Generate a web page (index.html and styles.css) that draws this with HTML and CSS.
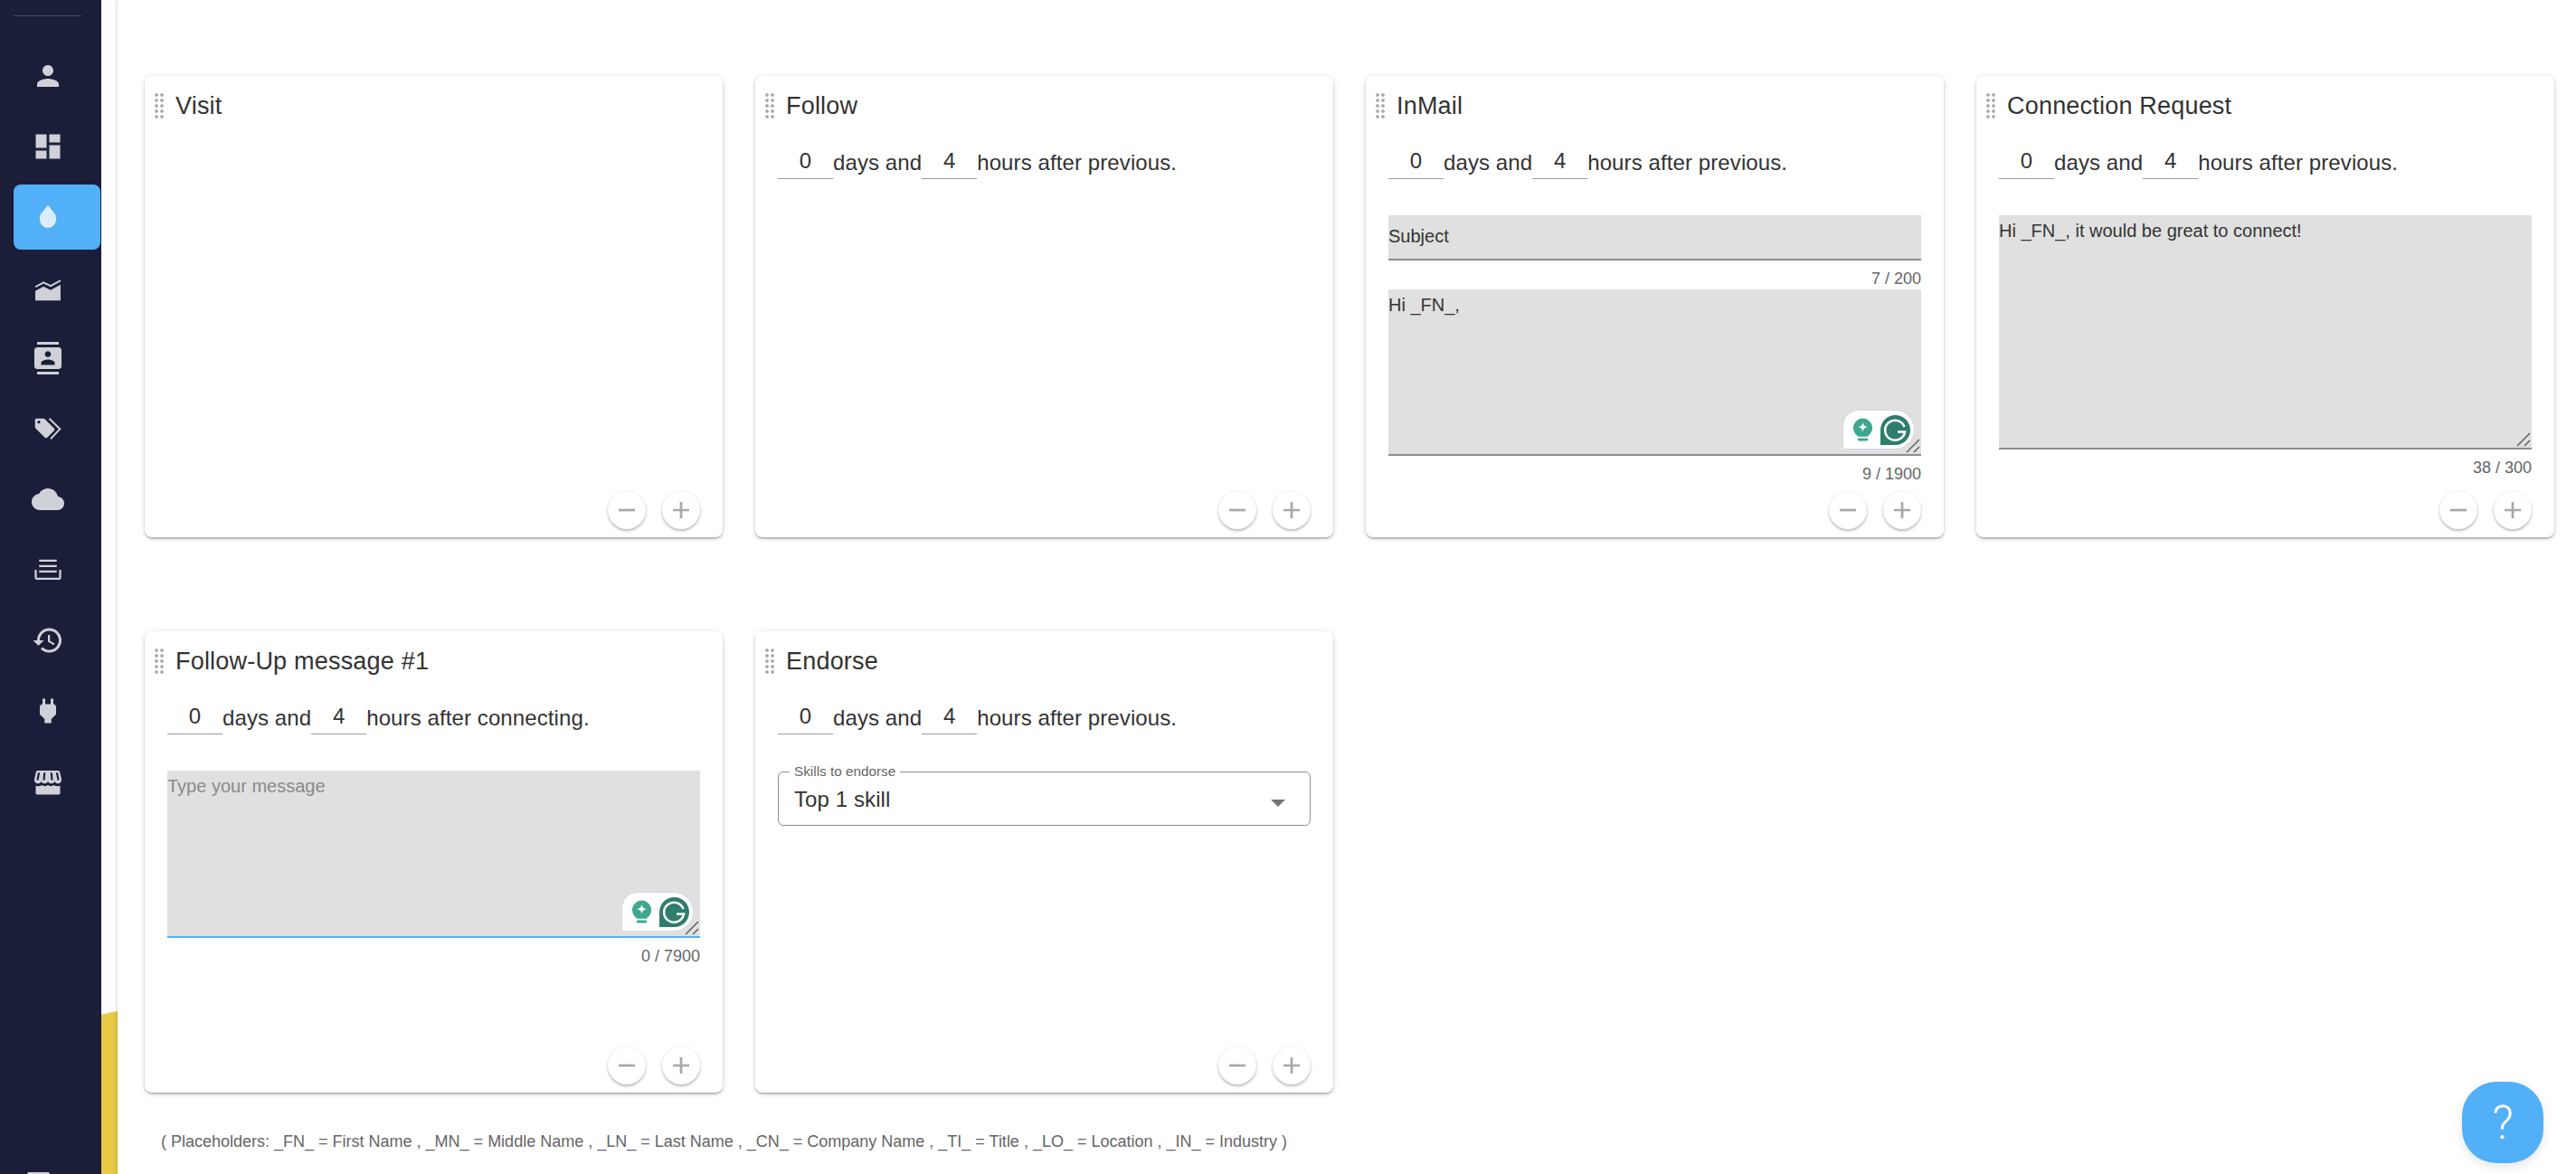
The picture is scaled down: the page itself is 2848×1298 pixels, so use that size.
FILE: index.html
```html
<!DOCTYPE html>
<html>
<head>
    <meta charset="UTF-8" />
    <title>Campaign steps</title>
    <link rel="stylesheet" href="styles.css">
</head>
<body>
<nav class="sidebar">
    <div class="sidebar-rule"></div>
    <a class="nav-item"><svg class="nav-icon" viewBox="0 0 24 24"><path d="M12 12c2.21 0 4-1.79 4-4s-1.79-4-4-4-4 1.79-4 4 1.79 4 4 4zm0 2c-2.67 0-8 1.34-8 4v2h16v-2c0-2.66-5.33-4-8-4z"/></svg></a>
    <a class="nav-item"><svg class="nav-icon" viewBox="0 0 24 24"><path d="M3 13h8V3H3v10zm0 8h8v-6H3v6zm10 0h8V11h-8v10zm0-18v6h8V3h-8z"/></svg></a>
    <a class="nav-item active"><svg class="nav-icon" viewBox="0 0 24 24"><path d="M12 3.300l4.400 5.300c1.100 1.300 1.700 2.700 1.700 4.600 0 3.700-2.700 6.800-6.100 6.800s-6.100-3.100-6.100-6.800c0-1.900.6-3.300 1.700-4.600z"/></svg></a>
    <a class="nav-item"><svg class="nav-icon" viewBox="0 0 24 24"><path d="M2.700 21.500v-7l6-3.300 5.300 2.600 7.300-4v11.700z"/><path class="nav-line" d="M2.700 11.500l6-3.300 5.300 2.600 7.300-4"/></svg></a>
    <a class="nav-item"><svg class="nav-icon" viewBox="0 0 24 24"><path d="M20 0H4v2h16V0zM4 24h16v-2H4v2zM20 4H4c-1.100 0-2 .9-2 2v12c0 1.100.9 2 2 2h16c1.100 0 2-.9 2-2V6c0-1.100-.9-2-2-2zm-8 2.750c1.240 0 2.250 1.010 2.250 2.250s-1.010 2.250-2.250 2.250S9.750 10.240 9.750 9 10.760 6.750 12 6.750zM17 17H7v-1.500c0-1.670 3.330-2.500 5-2.500s5 .83 5 2.500V17z"/></svg></a>
    <a class="nav-item"><svg class="nav-icon" viewBox="0 0 24 24"><path fill-rule="evenodd" d="M3.500 4.500h5.200c.4 0 .8.2 1.100.5l6.700 6.700c.5.5.5 1.300 0 1.800l-5 5c-.5.5-1.300.5-1.800 0L3 11.800c-.3-.3-.5-.7-.5-1.100V5.500c0-.6.4-1 1-1zM5.300 6a1.100 1.100 0 1 0 0 2.200 1.100 1.100 0 0 0 0-2.200z"/><path class="nav-line" d="M13 4.500l7.800 7.700-6.800 7.300"/></svg></a>
    <a class="nav-item"><svg class="nav-icon" viewBox="0 0 24 24"><path d="M19.350 10.040C18.670 6.590 15.640 4 12 4 9.110 4 6.600 5.640 5.350 8.040 2.340 8.360 0 10.910 0 14c0 3.310 2.690 6 6 6h13c2.760 0 5-2.240 5-5 0-2.640-2.050-4.780-4.650-4.960z"/></svg></a>
    <a class="nav-item"><svg class="nav-icon" viewBox="0 0 24 24"><path d="M5.500 4.500h13V6h-13zM5.500 8.500h13V10h-13zM5.500 12.500h13V14h-13z"/><path class="nav-line tray" d="M3 12v5.500a1 1 0 0 0 1 1h16a1 1 0 0 0 1-1V12"/></svg></a>
    <a class="nav-item"><svg class="nav-icon" viewBox="0 0 24 24"><path d="M13 3c-4.970 0-9 4.030-9 9H1l3.890 3.890.07.14L9 12H6c0-3.870 3.130-7 7-7s7 3.130 7 7-3.130 7-7 7c-1.930 0-3.680-.79-4.940-2.060l-1.420 1.420C8.270 19.990 10.510 21 13 21c4.970 0 9-4.030 9-9s-4.030-9-9-9zm-1 5v5l4.280 2.540.72-1.210-3.500-2.080V8H12z"/></svg></a>
    <a class="nav-item"><svg class="nav-icon" viewBox="0 0 24 24"><path d="M16.010 7L16 3h-2v4h-4V3H8v4h-.01C7 6.990 6 7.990 6 8.990v5.490L9.500 18v3h5v-3l3.500-3.510v-5.500c0-1-1-2-1.990-1.990z"/></svg></a>
    <a class="nav-item"><svg class="nav-icon" viewBox="0 0 24 24"><path d="M4.500 4h15c.6 0 1.100.4 1.300 1l1.200 5.500c.2 1.800-1 3-2.500 3-1.200 0-2-.6-2.500-1.400-.5.8-1.500 1.400-2.500 1.400s-2-.6-2.500-1.400c-.5.8-1.500 1.400-2.500 1.400s-2-.6-2.500-1.400c-.5.8-1.300 1.400-2.500 1.400-1.500 0-2.700-1.200-2.500-3L3.200 5c.2-.6.7-1 1.300-1z"/><path class="nav-stripe" d="M5.400 5.500L4.300 11M9.500 5.500L9 11M14.500 5.500l.5 5.500M18.600 5.500l1.100 5.500"/><path d="M3 15.200c1.800.6 3.300.3 4.500-.5 1.400 1 3 1 4.500 0 1.400 1 3 1 4.500 0 1.200.8 2.700 1.100 4.500.5v5.300c0 .7-.5 1.200-1.200 1.200H4.200c-.7 0-1.200-.5-1.200-1.200z"/></svg></a>
    <div class="sidebar-peek"></div>
</nav>

<div class="gutter">
    <svg class="gutter-wave" viewBox="0 0 18 180" preserveAspectRatio="none"><path d="M0 4Q9 1.500 18 0V180H0z"/></svg>
</div>

<main class="main">
    <div class="cards">
        <section class="card">
            <header class="card-head"><span class="drag"></span><h2 class="card-title">Visit</h2></header>
            <div class="card-actions">
                <button class="round-btn"><svg viewBox="0 0 24 24"><path d="M3 12h18"/></svg></button>
                <button class="round-btn"><svg viewBox="0 0 24 24"><path d="M3 12h18M12 3v18"/></svg></button>
            </div>
        </section>

        <section class="card">
            <header class="card-head"><span class="drag"></span><h2 class="card-title">Follow</h2></header>
            <div class="delay"><input class="delay-input" value="0">days and<input class="delay-input" value="4">hours after previous.</div>
            <div class="card-actions">
                <button class="round-btn"><svg viewBox="0 0 24 24"><path d="M3 12h18"/></svg></button>
                <button class="round-btn"><svg viewBox="0 0 24 24"><path d="M3 12h18M12 3v18"/></svg></button>
            </div>
        </section>

        <section class="card">
            <header class="card-head"><span class="drag"></span><h2 class="card-title">InMail</h2></header>
            <div class="delay"><input class="delay-input" value="0">days and<input class="delay-input" value="4">hours after previous.</div>
            <input class="subject" value="Subject">
            <div class="counter">7 / 200</div>
            <div class="message">
                <textarea class="message-text inmail">Hi _FN_,</textarea>
                <div class="grammarly">
                    <svg class="g-bulb" viewBox="0 0 24 28"><path d="M12 1a11 11 0 0 0-6 20.200V22h12v-.8A11 11 0 0 0 12 1z"/><path class="g-star" d="M12 5.500c.6 3.500 2 4.900 5.500 5.500-3.500.6-4.900 2-5.500 5.500-.6-3.500-2-4.900-5.500-5.500 3.500-.6 4.900-2 5.500-5.500z"/><rect x="6" y="24" width="12" height="3" rx="1.500"/></svg>
                    <svg class="g-logo" viewBox="0 0 33 33"><path d="M16.500 0A16.500 16.500 0 0 1 16.500 33H0V16.500A16.500 16.500 0 0 1 16.500 0z"/><path class="g-letter" d="M26.500 13A11 11 0 1 0 27 18.500H19"/></svg>
                </div>
                <svg class="grip" viewBox="0 0 16 16"><path d="M1 15L15 1M9 15l6-6"/></svg>
            </div>
            <div class="counter">9 / 1900</div>
            <div class="card-actions">
                <button class="round-btn"><svg viewBox="0 0 24 24"><path d="M3 12h18"/></svg></button>
                <button class="round-btn"><svg viewBox="0 0 24 24"><path d="M3 12h18M12 3v18"/></svg></button>
            </div>
        </section>

        <section class="card">
            <header class="card-head"><span class="drag"></span><h2 class="card-title">Connection Request</h2></header>
            <div class="delay"><input class="delay-input" value="0">days and<input class="delay-input" value="4">hours after previous.</div>
            <div class="message">
                <textarea class="message-text connect">Hi _FN_, it would be great to connect!</textarea>
                <svg class="grip" viewBox="0 0 16 16"><path d="M1 15L15 1M9 15l6-6"/></svg>
            </div>
            <div class="counter">38 / 300</div>
            <div class="card-actions">
                <button class="round-btn"><svg viewBox="0 0 24 24"><path d="M3 12h18"/></svg></button>
                <button class="round-btn"><svg viewBox="0 0 24 24"><path d="M3 12h18M12 3v18"/></svg></button>
            </div>
        </section>

        <section class="card">
            <header class="card-head"><span class="drag"></span><h2 class="card-title">Follow-Up message #1</h2></header>
            <div class="delay"><input class="delay-input" value="0">days and<input class="delay-input" value="4">hours after connecting.</div>
            <div class="message">
                <textarea class="message-text focused" placeholder="Type your message"></textarea>
                <div class="grammarly">
                    <svg class="g-bulb" viewBox="0 0 24 28"><path d="M12 1a11 11 0 0 0-6 20.200V22h12v-.8A11 11 0 0 0 12 1z"/><path class="g-star" d="M12 5.500c.6 3.500 2 4.900 5.500 5.500-3.500.6-4.900 2-5.500 5.500-.6-3.500-2-4.900-5.500-5.500 3.500-.6 4.900-2 5.500-5.500z"/><rect x="6" y="24" width="12" height="3" rx="1.500"/></svg>
                    <svg class="g-logo" viewBox="0 0 33 33"><path d="M16.500 0A16.500 16.500 0 0 1 16.500 33H0V16.500A16.500 16.500 0 0 1 16.500 0z"/><path class="g-letter" d="M26.500 13A11 11 0 1 0 27 18.500H19"/></svg>
                </div>
                <svg class="grip" viewBox="0 0 16 16"><path d="M1 15L15 1M9 15l6-6"/></svg>
            </div>
            <div class="counter">0 / 7900</div>
            <div class="card-actions">
                <button class="round-btn"><svg viewBox="0 0 24 24"><path d="M3 12h18"/></svg></button>
                <button class="round-btn"><svg viewBox="0 0 24 24"><path d="M3 12h18M12 3v18"/></svg></button>
            </div>
        </section>

        <section class="card">
            <header class="card-head"><span class="drag"></span><h2 class="card-title">Endorse</h2></header>
            <div class="delay"><input class="delay-input" value="0">days and<input class="delay-input" value="4">hours after previous.</div>
            <fieldset class="select">
                <legend class="select-label">Skills to endorse</legend>
                <span class="select-value">Top 1 skill</span>
                <span class="select-arrow"></span>
            </fieldset>
            <div class="card-actions">
                <button class="round-btn"><svg viewBox="0 0 24 24"><path d="M3 12h18"/></svg></button>
                <button class="round-btn"><svg viewBox="0 0 24 24"><path d="M3 12h18M12 3v18"/></svg></button>
            </div>
        </section>
    </div>
    <p class="placeholders">( Placeholders: _FN_ = First Name , _MN_ = Middle Name , _LN_ = Last Name , _CN_ = Company Name , _TI_ = Title , _LO_ = Location , _IN_ = Industry )</p>
</main>

<button class="help">?</button>
</body>
</html>
```

FILE: styles.css
```css
*{
    margin: 0;
    padding: 0;
    box-sizing: border-box;
}
html, body{
    height: 100%;
    overflow: hidden;
}
body{
    display: flex;
    background-color: #fff;
    font-family: "Liberation Sans", Arial, sans-serif;
    color: #333;
}

/* left menu */
.sidebar{
    display: flex;
    flex-direction: column;
    flex: 0 0 112px;
    padding-top: 17px;
    background-color: #1b1e38;
}
.sidebar-rule{
    width: 75px;
    height: 1px;
    margin: 0 0 30px 15px;
    background-color: #4c4e66;
}
.nav-item{
    display: flex;
    align-items: center;
    width: 96px;
    height: 72px;
    margin: 0 0 6px 15px;
    padding-left: 20px;
    border-radius: 8px;
}
.nav-item.active{
    background-color: #52b0f8;
}
.nav-icon{
    width: 36px;
    height: 36px;
    fill: #d0d1d8;
}
.nav-item.active .nav-icon{
    fill: #dceefe;
}
.nav-line{
    fill: none;
    stroke: #d0d1d8;
    stroke-width: 1.300;
}
.nav-line.tray{
    stroke-width: 1.500;
}
.nav-stripe{
    fill: none;
    stroke: #1b1e38;
    stroke-width: 1.400;
}
.sidebar-peek{
    width: 25px;
    height: 2px;
    margin: auto 0 0 30px;
    background-color: #d0d1d8;
    border-radius: 2px 2px 0 0;
}

/* strip between menu and page */
.gutter{
    display: flex;
    flex-direction: column;
    justify-content: flex-end;
    flex: 0 0 18px;
}
.gutter-wave{
    width: 18px;
    height: 180px;
    fill: #e8c945;
}

.main{
    flex: 1;
    position: relative;
    padding: 84px 0 0 30px;
    background-color: #fff;
    box-shadow: 0 0 5px rgba(0,0,0,0.22);
}
.cards{
    display: grid;
    grid-template-columns: repeat(4, 639px);
    grid-auto-rows: 510px;
    column-gap: 36px;
    row-gap: 104px;
}
.card{
    display: flex;
    flex-direction: column;
    padding: 0 25px;
    background-color: #fff;
    border-radius: 8px;
    box-shadow: 0 2px 3px -1px rgba(0,0,0,0.4), 0 1px 6px rgba(0,0,0,0.14);
}
.card-head{
    display: flex;
    align-items: center;
    height: 34px;
    margin: 16px 0 0 -14px;
}
.drag{
    width: 10px;
    height: 30px;
    margin-right: 13px;
    background: radial-gradient(circle, #aaa 1.500px, transparent 2px) -1px 0/6px 6px;
}
.card-title{
    font-size: 27px;
    font-weight: 400;
    letter-spacing: 0.2px;
}
.delay{
    display: flex;
    align-items: flex-start;
    height: 40px;
    margin-top: 25px;
    font-size: 24px;
    line-height: 41px;
    letter-spacing: 0.1px;
    white-space: nowrap;
}
.delay-input{
    width: 61px;
    height: 39px;
    border: 0;
    border-bottom: 1px solid #9b9b9b;
    outline: 0;
    background: none;
    text-align: center;
    font: inherit;
    line-height: normal;
    color: #333;
}

/* text fields */
.subject{
    display: block;
    width: 100%;
    height: 50px;
    margin-top: 39px;
    padding-bottom: 2px;
    border: 0;
    border-bottom: 2px solid #8c8c8c;
    outline: 0;
    background-color: #e0e0e0;
    font: 20px "Liberation Sans", Arial, sans-serif;
    color: #333;
}
.counter{
    height: 32px;
    font: 18px/40px "Liberation Sans", Arial, sans-serif;
    color: #666;
    text-align: right;
}
.message{
    position: relative;
    margin-top: 39px;
}
.counter + .message{
    margin-top: 0;
}
.message-text{
    display: block;
    width: 100%;
    height: 185px;
    padding: 6px 0 0 0;
    border: 0;
    border-bottom: 2px solid #8c8c8c;
    outline: 0;
    background-color: #e0e0e0;
    font: 20px "Liberation Sans", Arial, sans-serif;
    color: #333;
    resize: none;
}
.message-text.inmail{
    height: 184px;
}
.message-text.connect{
    height: 259px;
}
.message-text.focused{
    border-bottom-color: #52b0f8;
}
.message-text::placeholder{
    color: #8a8a8a;
}
.grip{
    position: absolute;
    right: 1px;
    bottom: 3px;
    width: 16px;
    height: 16px;
    fill: none;
    stroke: #555;
    stroke-width: 1.300;
}
.grammarly{
    position: absolute;
    right: 7px;
    bottom: 7px;
    display: flex;
    align-items: center;
    justify-content: space-between;
    width: 80px;
    height: 44px;
    padding: 0 4px 0 10px;
    background-color: #fff;
    border: 1px solid #d5d8e8;
    border-radius: 18px 22px 22px 2px;
}
.g-bulb{
    width: 23px;
    height: 28px;
    fill: #3ea88f;
}
.g-star{
    fill: #fff;
}
.g-logo{
    width: 33px;
    height: 33px;
    fill: #2f7d6d;
}
.g-letter{
    fill: none;
    stroke: #fff;
    stroke-width: 2.500;
}

/* outlined select */
.select{
    position: relative;
    width: 589px;
    height: 68px;
    margin-top: 32px;
    padding: 0 17px;
    border: 1px solid #8f8f8f;
    border-radius: 6px;
}
.select-label{
    margin-left: -5px;
    padding: 0 5px;
    font-size: 15.300px;
    line-height: 16px;
    color: #666;
}
.select-value{
    display: block;
    margin-top: 9px;
    font-size: 24px;
    letter-spacing: 0.1px;
}
.select-arrow{
    position: absolute;
    right: 27px;
    top: 23px;
    border-left: 8px solid transparent;
    border-right: 8px solid transparent;
    border-top: 8px solid #757575;
}

/* step buttons */
.card-actions{
    display: flex;
    justify-content: flex-end;
    gap: 18px;
    margin-top: auto;
    padding-bottom: 9px;
}
.round-btn{
    width: 42px;
    height: 42px;
    border: 0;
    border-radius: 50%;
    background-color: #fff;
    box-shadow: 0 2px 3px rgba(0,0,0,0.25), 0 0 3px rgba(0,0,0,0.08);
}
.round-btn svg{
    display: block;
    width: 24px;
    height: 24px;
    margin: 0 auto;
    fill: none;
    stroke: #a8a8a8;
    stroke-width: 2.700;
}

.placeholders{
    margin: 44px 0 0 18px;
    font-size: 18px;
    line-height: 20px;
    color: #666;
    white-space: nowrap;
}

.help{
    position: fixed;
    right: 36px;
    bottom: 12px;
    width: 90px;
    height: 90px;
    border: 0;
    border-radius: 42%;
    background-color: #52b0f8;
    box-shadow: 0 4px 12px rgba(0,0,0,0.1);
    color: #fff;
    font: 300 52px Roboto, sans-serif;
}
```
